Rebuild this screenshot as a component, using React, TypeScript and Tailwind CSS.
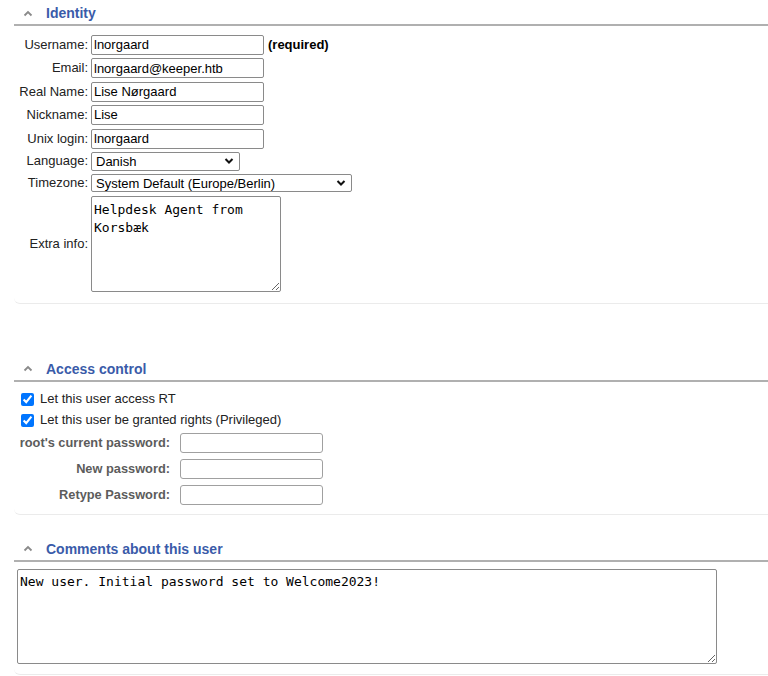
import React from "react";

const sans = "font-['Liberation_Sans',Arial,sans-serif]";
const mono = "font-['DejaVu_Sans_Mono',monospace]";

function Chevron() {
  return (
    <svg width="10" height="7" viewBox="0 0 10 7" className="ml-[9px] mr-[13px]">
      <path d="M1.5 5.5 L5 2 L8.5 5.5" fill="none" stroke="#8a8a8a" strokeWidth="1.8" />
    </svg>
  );
}

function Header({ title }: { title: string }) {
  return (
    <div className="flex items-center h-[26px] pt-[2px] border-b-2 border-[#b0b0b0]">
      <Chevron />
      <span className="text-[14px] leading-[16px] font-bold text-[#3a5ba9]">{title}</span>
    </div>
  );
}

function TextInput({ value, w = "w-[173px]" }: { value: string; w?: string }) {
  return (
    <div
      className={`${w} h-[20px] border border-[#8a8a8a] rounded-[2px] px-[2px] flex items-center text-[13px] text-black bg-white`}
    >
      {value}
    </div>
  );
}

function Select({ value, w, h }: { value: string; w: string; h: string }) {
  return (
    <div
      className={`relative ${w} ${h} border border-[#8a8a8a] rounded-[2px] pl-[4px] flex items-center text-[13px] text-black bg-white`}
    >
      {value}
      <svg width="10" height="7" viewBox="0 0 10 7" className="absolute right-[5px] top-1/2 -translate-y-1/2">
        <path d="M1.5 1.5 L5 5 L8.5 1.5" fill="none" stroke="#111" strokeWidth="2" />
      </svg>
    </div>
  );
}

function Label({ children }: { children: React.ReactNode }) {
  return <div className="text-right text-[13px] text-[#222] leading-[16px]">{children}</div>;
}

function PwLabel({ children }: { children: React.ReactNode }) {
  return <div className="text-right text-[12.8px] font-bold text-[#5c5c5c] leading-[16px]">{children}</div>;
}

function PwInput() {
  return <div className="w-[143px] h-[20px] border border-[#a0a0a0] rounded-[3px] bg-white" />;
}

function Check({ label }: { label: string }) {
  return (
    <div className="flex items-center h-[21px] pl-[7px]">
      <input type="checkbox" defaultChecked className="w-[13px] h-[13px] m-0 accent-[#0075ff]" />
      <span className="ml-[6px] text-[13px] text-[#222]">{label}</span>
    </div>
  );
}

export default function App() {
  return (
    <div className={`${sans} bg-white w-[768px] h-[676px] overflow-hidden pl-[14px]`}>
      {/* Identity */}
      <div className="border-b border-[#ebebeb] rounded-bl-[6px] pb-[11px]">
        <Header title="Identity" />
        <div className="grid grid-cols-[74px_auto] gap-x-[3px] gap-y-[3.4px] items-center mt-[9px]">
          <Label>Username:</Label>
          <div className="flex items-center">
            <TextInput value="lnorgaard" />
            <span className="ml-[4px] text-[13px] font-bold text-black">(required)</span>
          </div>
          <Label>Email:</Label>
          <TextInput value="lnorgaard@keeper.htb" />
          <Label>Real Name:</Label>
          <TextInput value="Lise Nørgaard" />
          <Label>Nickname:</Label>
          <TextInput value="Lise" />
          <Label>Unix login:</Label>
          <TextInput value="lnorgaard" />
          <Label>Language:</Label>
          <Select value="Danish" w="w-[149px]" h="h-[19px]" />
          <Label>Timezone:</Label>
          <Select value="System Default (Europe/Berlin)" w="w-[261px]" h="h-[18px]" />
          <Label>Extra info:</Label>
          <textarea
            defaultValue={"Helpdesk Agent from\nKorsbæk"}
            className={`${mono} w-[190px] h-[96px] border border-[#8a8a8a] rounded-[2px] px-[2px] pt-[4px] text-[13px] leading-[18px] text-black resize-both`}
          />
        </div>
      </div>

      {/* Access control */}
      <div className="mt-[52px] border-b border-[#ebebeb] rounded-bl-[6px] pb-[9px]">
        <Header title="Access control" />
        <div className="mt-[7px]">
          <Check label="Let this user access RT" />
          <Check label="Let this user be granted rights (Privileged)" />
        </div>
        <div className="grid grid-cols-[156px_auto] gap-x-[10px] gap-y-[6px] items-center mt-[2px]">
          <PwLabel>root's current password:</PwLabel>
          <PwInput />
          <PwLabel>New password:</PwLabel>
          <PwInput />
          <PwLabel>Retype Password:</PwLabel>
          <PwInput />
        </div>
      </div>

      {/* Comments */}
      <div className="mt-[21px] border-b border-[#ebebeb] rounded-bl-[6px] pb-[10px]">
        <Header title="Comments about this user" />
        <textarea
          defaultValue="New user. Initial password set to Welcome2023!"
          className={`${mono} block ml-[3px] mt-[7px] w-[700px] h-[95px] border border-[#8a8a8a] rounded-[2px] px-[2px] pt-[3px] text-[13px] leading-[18px] text-black`}
        />
      </div>
    </div>
  );
}
